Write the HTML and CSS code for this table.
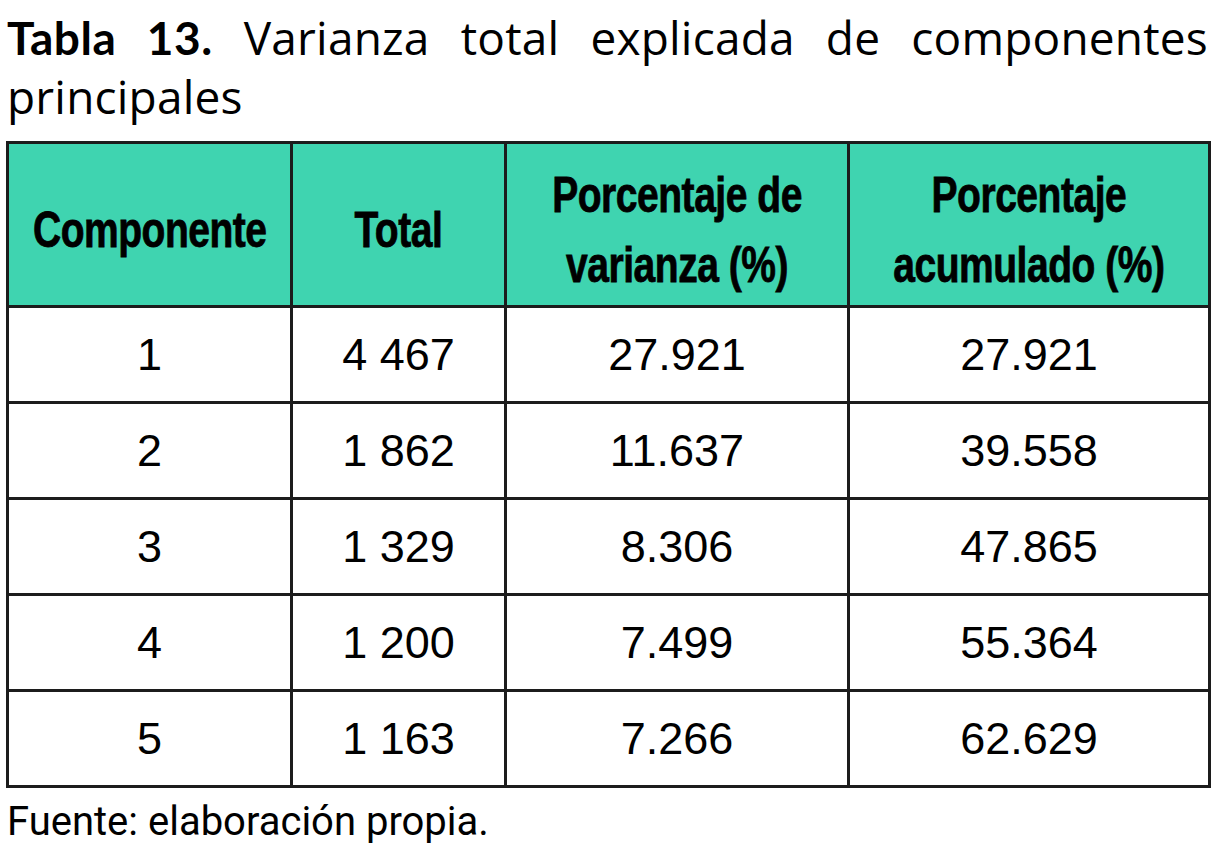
FILE: index.html
```html
<!DOCTYPE html>
<html lang="es">
<head>
<meta charset="utf-8">
<title>Tabla 13</title>
<link rel="stylesheet" href="styles.css">
</head>
<body>
<main class="page">
  <h1 class="caption"><span class="caption-label">Tabla 13.</span> Varianza total explicada de componentes principales</h1>
  <table class="data">
    <colgroup>
      <col class="c1"><col class="c2"><col class="c3"><col class="c4">
    </colgroup>
    <thead>
      <tr>
        <th><div class="th-box"><span class="th-text">Componente</span></div></th>
        <th><div class="th-box"><span class="th-text">Total</span></div></th>
        <th><div class="th-box"><span class="th-text">Porcentaje de<br>varianza (%)</span></div></th>
        <th><div class="th-box"><span class="th-text">Porcentaje<br>acumulado (%)</span></div></th>
      </tr>
    </thead>
    <tbody>
      <tr><td>1</td><td>4 467</td><td>27.921</td><td>27.921</td></tr>
      <tr><td>2</td><td>1 862</td><td>11.637</td><td>39.558</td></tr>
      <tr><td>3</td><td>1 329</td><td>8.306</td><td>47.865</td></tr>
      <tr><td>4</td><td>1 200</td><td>7.499</td><td>55.364</td></tr>
      <tr><td>5</td><td>1 163</td><td>7.266</td><td>62.629</td></tr>
    </tbody>
  </table>
  <p class="source">Fuente: elaboración propia.</p>
</main>
</body>
</html>
```
FILE: styles.css
```css
html, body {
  margin: 0;
  padding: 0;
  background: #ffffff;
  color: #000000;
}
.page {
  padding: 8px 14px 0 6px;
  width: 1202px;
}
.caption {
  margin: 0 0 16px 1px;
  font-family: "Open Sans", "Noto Sans", sans-serif;
  font-weight: 400;
  font-size: 46px;
  line-height: 58px;
  text-align: justify;
  letter-spacing: 0.2px;
}
.caption-label {
  font-family: Lato, "Open Sans", sans-serif;
  font-weight: 700;
  letter-spacing: 0.5px;
}
.data {
  width: 1202px;
  border-collapse: collapse;
  table-layout: fixed;
  border: 3px solid #1c1c1c;
}
.c1 { width: 284px; }
.c2 { width: 214px; }
.c3 { width: 343px; }
.c4 { width: 361px; }
.data th,
.data td {
  border: 3px solid #1c1c1c;
  text-align: center;
  padding: 0;
}
.data th {
  background: #3fd4b0;
  height: 164px;
  padding-top: 10px;
  box-sizing: border-box;
}
.th-box {
  display: flex;
  justify-content: center;
  align-items: center;
}
.th-text {
  display: block;
  flex-shrink: 0;
  white-space: nowrap;
  transform: scaleX(0.78);
  transform-origin: center;
  font-family: "Liberation Sans", Arial, sans-serif;
  font-weight: 700;
  font-size: 50px;
  line-height: 70px;
  letter-spacing: -0.6px;
  -webkit-text-stroke: 0.8px #000000;
}
.data td {
  height: 93px;
  font-family: "Liberation Sans", Arial, sans-serif;
  font-size: 45px;
  line-height: 50px;
}
.source {
  margin: 10px 0 0 1px;
  font-family: Roboto, "Liberation Sans", sans-serif;
  font-size: 40px;
  line-height: 48px;
}
```
